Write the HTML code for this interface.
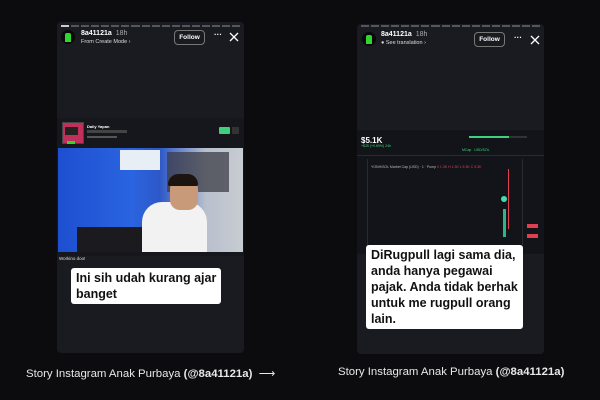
<!DOCTYPE html>
<html><head><style>
body{margin:0;width:600px;height:400px;background:#0c0c0e;font-family:"Liberation Sans",sans-serif;position:relative;overflow:hidden}
.card{position:absolute;background:#1a1b21;border-radius:4px}
.abs{position:absolute}
.bars{position:absolute;left:4px;right:4px;top:3px;height:2px;display:flex;gap:2px}
.bars i{flex:1;background:#55565c}
.av{position:absolute;width:14px;height:14px;border-radius:50%;background:#0a0a0a}
.av:after{content:"";position:absolute;left:4px;top:3px;width:6px;height:9px;background:#2fd62f;border-radius:2px 2px 0 0}
.nm{position:absolute;color:#fff;font-size:7px;font-weight:bold}
.nm span{color:#aaa;font-weight:normal;margin-left:4px}
.sub{position:absolute;color:#ddd;font-size:5.5px}
.fol{position:absolute;border:1px solid #777;border-radius:4px;color:#fff;font-size:6.5px;font-weight:bold;text-align:center;line-height:13px;width:29px;height:13px}
.dots{position:absolute;color:#fff;font-size:8px;font-weight:bold}
.cap{position:absolute;background:#fff;color:#111;font-weight:bold;border-radius:3px;font-size:12.5px;line-height:16px;padding:2px 5px;white-space:nowrap}
.foot{position:absolute;top:366px;color:#e8e8e8;font-size:11.4px}
</style></head><body>

<div class="card" style="left:57px;top:22px;width:187px;height:331px">
 <div class="bars"><i style="background:#ccc"></i><i></i><i></i><i></i><i></i><i></i><i></i><i></i><i></i><i></i><i></i><i></i><i></i><i></i><i></i><i></i><i></i><i></i></div>
 <div class="av" style="left:4px;top:8px"></div>
 <div class="nm" style="left:24px;top:8px">8a41121a<span>18h</span></div>
 <div class="sub" style="left:24px;top:17px">From Create Mode ›</div>
 <div class="fol" style="left:117px;top:8px">Follow</div>
 <div class="dots" style="left:157px;top:8px">···</div>
 <svg class="abs" style="left:172px;top:10px" width="10" height="10"><path d="M1 1L9 9M9 1L1 9" stroke="#fff" stroke-width="1.3"/></svg>
 <div class="abs" style="left:0;top:96px;width:187px;height:138px;background:#16171c"></div>
 <div class="abs" style="left:5px;top:100px;width:20px;height:20px;background:#c0305a;border:1px solid #444"></div>
 <div class="abs" style="left:8px;top:105px;width:13px;height:8px;background:#222"></div>
 <div class="abs" style="left:10px;top:119px;width:8px;height:3px;background:#2fd62f"></div>
 <div class="abs" style="left:30px;top:102px;color:#fff;font-size:4px;font-weight:bold">Daily Yapan</div>
 <div class="abs" style="left:30px;top:108px;width:40px;height:3px;background:#444"></div>
 <div class="abs" style="left:30px;top:114px;width:30px;height:2px;background:#555"></div>
 <div class="abs" style="left:162px;top:105px;width:11px;height:7px;background:#3fd07d;border-radius:1px"></div>
 <div class="abs" style="left:175px;top:105px;width:7px;height:7px;background:#333"></div>
 <div class="abs" style="left:1px;top:126px;width:185px;height:104px;background:linear-gradient(90deg,#1d4fd0 0%,#2a64e0 40%,#2e58c8 55%,#b9c0cc 80%,#c8ccd2 100%)"></div>
 <div class="abs" style="left:63px;top:128px;width:40px;height:20px;background:#e8eef5"></div>
 <div class="abs" style="left:110px;top:130px;width:62px;height:40px;background:rgba(60,60,70,.75)"></div>
 <div class="abs" style="left:20px;top:205px;width:80px;height:25px;background:#1a1a1f"></div>
 <div class="abs" style="left:85px;top:180px;width:65px;height:50px;background:#f2f2f2;border-radius:20px 20px 0 0"></div>
 <div class="abs" style="left:113px;top:155px;width:28px;height:33px;background:#c89a7a;border-radius:12px 12px 10px 10px"></div>
 <div class="abs" style="left:111px;top:152px;width:30px;height:12px;background:#1b1410;border-radius:12px 12px 2px 2px"></div>
 <div class="abs" style="left:2px;top:234px;color:#ddd;font-size:4.5px">Workino doo!</div>
 <div class="cap" style="left:14px;top:246px">Ini sih udah kurang ajar<br>banget</div>
</div>

<div class="card" style="left:357px;top:24px;width:187px;height:330px">
 <div class="bars" style="top:1px"><i></i><i></i><i></i><i></i><i></i><i></i><i></i><i></i><i></i><i></i><i></i><i></i><i></i><i></i><i></i><i></i><i></i><i></i></div>
 <div class="av" style="left:5px;top:8px"></div>
 <div class="nm" style="left:24px;top:7px">8a41121a<span>18h</span></div>
 <div class="sub" style="left:24px;top:16px">● See translation ›</div>
 <div class="fol" style="left:117px;top:8px">Follow</div>
 <div class="dots" style="left:157px;top:9px">···</div>
 <svg class="abs" style="left:173px;top:11px" width="10" height="10"><path d="M1 1L9 9M9 1L1 9" stroke="#fff" stroke-width="1.3"/></svg>
 <div class="abs" style="left:0;top:106px;width:187px;height:124px;background:#131419"></div>
 <div class="abs" style="left:4px;top:112px;color:#fff;font-size:8px;font-weight:bold">$5.1K</div>
 <div class="abs" style="left:4px;top:120px;color:#3fd07d;font-size:3.5px">+$25 (+0.69%) 24h</div>
 <div class="abs" style="left:112px;top:112px;width:58px;height:2px;background:#333"><div style="width:40px;height:2px;background:#3fd07d"></div></div>
 <div class="abs" style="left:0;top:131px;width:187px;height:1px;background:#2a2a30"></div>
 <div class="abs" style="left:105px;top:124px;color:#3fd07d;font-size:3.5px">MCap &nbsp; USD/SOL</div>
 <div class="abs" style="left:14px;top:141px;color:#bbb;font-size:3.5px">YONH/SOL Market Cap (USD) · 1 · Pump <span style="color:#e04050">0 1.3K H 1.3K L 5.3K C 5.3K</span></div>
 <div class="abs" style="left:10px;top:135px;width:1px;height:95px;background:#2a2a30"></div>
 <div class="abs" style="left:165px;top:135px;width:1px;height:95px;background:#2a2a30"></div>
 <div class="abs" style="left:151px;top:145px;width:1px;height:60px;background:#e04050"></div>
 <div class="abs" style="left:146px;top:185px;width:3px;height:28px;background:#2bb58a"></div>
 <div class="abs" style="left:144px;top:172px;width:6px;height:6px;border-radius:50%;background:#3fe0b0"></div>
 <div class="abs" style="left:170px;top:200px;width:11px;height:4px;background:#e04050"></div>
 <div class="abs" style="left:170px;top:210px;width:11px;height:4px;background:#e04050"></div>
 <div class="cap" style="left:9px;top:221px">DiRugpull lagi sama dia,<br>anda hanya pegawai<br>pajak. Anda tidak berhak<br>untuk me rugpull orang<br>lain.</div>
</div>

<div class="foot" style="left:26px">Story Instagram Anak Purbaya <b>(@8a41121a)</b> &nbsp;⟶</div>
<div class="foot" style="left:338px">Story Instagram Anak Purbaya <b>(@8a41121a)</b></div>
</body></html>
